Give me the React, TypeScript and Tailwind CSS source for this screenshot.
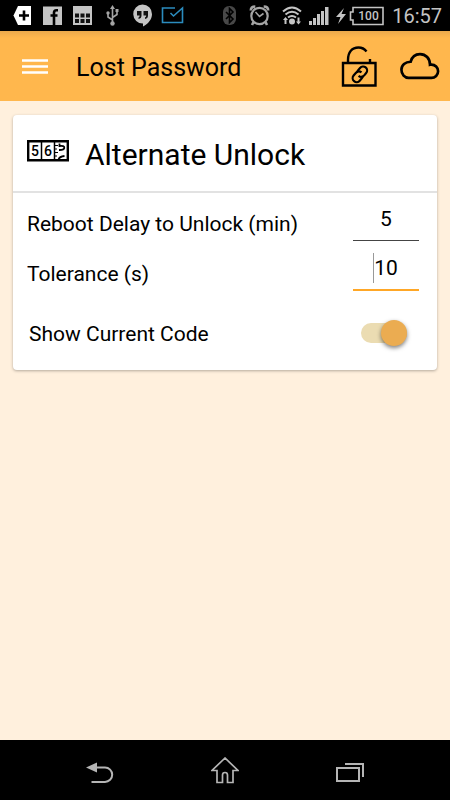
import { useState } from "react";
import type { ReactNode } from "react";

function StatusIcon({ children }: { children: ReactNode }) {
  return (
    <svg width="30" height="31" viewBox="0 0 30 31" fill="none" aria-hidden="true">
      {children}
    </svg>
  );
}

function StatusBar() {
  return (
    <div className="flex h-[31px] items-center justify-between bg-black px-2 text-[#c4c4c4]">
      <div className="flex">
        <StatusIcon>
          <path d="M10 6h13v19H10L5.500 15.500z" fill="#fff" />
          <path d="M16 10.500v10M11 15.500h10" stroke="#000" strokeWidth="2.600" />
        </StatusIcon>
        <StatusIcon>
          <path d="M5 6.500h19v18.500H5z" fill="#c4c4c4" />
          <path d="M20 10.200h-1.500q-2.500 0-2.500 2.500V25M12.500 15.500h7" stroke="#000" strokeWidth="2.600" />
        </StatusIcon>
        <StatusIcon>
          <path d="M5 6h19v19H5z" fill="#c4c4c4" />
          <path d="M7 13.500h4v4H7zM12.500 13.500h4v4h-4zM18 13.500h4v4h-4zM7 19h4v4H7zM12.500 19h4v4h-4zM18 19h4v4h-4z" fill="#111" />
        </StatusIcon>
        <StatusIcon>
          <path d="M14.500 8v15M14.500 20l-4.500-3v-4M14.500 17.500l4.500-3v-4" stroke="#a5a5a5" strokeWidth="1.600" />
          <path d="M14.500 5l2.500 4h-5zM17.500 9h3v3h-3z" fill="#a5a5a5" />
          <circle cx="10" cy="13" r="1.700" fill="#a5a5a5" />
          <circle cx="14.500" cy="23.500" r="2.200" fill="#a5a5a5" />
        </StatusIcon>
        <StatusIcon>
          <path d="M14.500 4.500a9.500 9.500 0 0 1 9.500 9.700c0 5-4 9.800-9 12.300v-3a9.300 9.300 0 1 1-.5-19z" fill="#c4c4c4" />
          <path d="M9 11h4.500v4.500q0 3-3 3.500v-1.500q1.200-.5 1.200-2H9zM15.500 11H20v4.500q0 3-3 3.500v-1.500q1.200-.5 1.200-2h-2.700z" fill="#111" />
        </StatusIcon>
        <StatusIcon>
          <path d="M17 8H4.500v14.500h20V8l-9 8-3-3" stroke="#2b8cbe" strokeWidth="1.600" />
        </StatusIcon>
      </div>

      <div className="flex items-center">
        <StatusIcon>
          <rect x="9" y="6" width="13" height="19" rx="6" fill="#484848" />
          <path d="M12 12l7 7-3.500 3.500v-14L19 12l-7 7" stroke="#000" strokeWidth="1.600" />
        </StatusIcon>
        <StatusIcon>
          <circle cx="15.500" cy="16" r="8.200" stroke="#a5a5a5" strokeWidth="2.200" />
          <path d="M11.500 12l4 4.500 4-3" stroke="#a5a5a5" strokeWidth="1.600" />
          <path d="M6.800 10.500q0-4 4.500-4M24.200 10.500q0-4-4.500-4M9.500 22L8 25M21.500 22l1.500 3" stroke="#a5a5a5" strokeWidth="2.600" />
        </StatusIcon>
        <svg width="34" height="31" viewBox="0 0 34 31" fill="none" aria-hidden="true">
          <path d="M9 11.500q9-8 18 0M11.500 14.500q6.500-5.500 13 0M14 17.500q4-3 8 0" stroke="#c4c4c4" strokeWidth="2" />
          <circle cx="18" cy="21.500" r="3" fill="#c4c4c4" />
          <path d="M10.500 24v-4H9l2.500-3 2.500 3h-1.500v4zM23.500 17.500v4H22l2.500 3 2.500-3h-1.500v-4z" fill="#c4c4c4" />
        </svg>
        <svg width="24" height="31" viewBox="0 0 24 31" fill="#c4c4c4" aria-hidden="true">
          <path d="M1 21h3v4H1zM5 18h3v7H5zM9 14h3v11H9zM13 11h3v14h-3zM17 7h3.500v18H17z" />
        </svg>
        <svg width="17" height="31" viewBox="0 0 17 31" fill="#c4c4c4" aria-hidden="true">
          <path d="M12 8L4 17h4.500L6 24l8-10H9.500z" />
        </svg>
        <div className="relative h-[31px] w-[35px]">
          <svg width="35" height="31" viewBox="0 0 35 31" fill="none" aria-hidden="true">
            <path d="M4 7.500h30v17H4v-4.500H1.500v-8H4z" stroke="#c4c4c4" strokeWidth="1.600" />
          </svg>
          <span className="absolute inset-0 pl-1 text-center text-xs leading-8 font-medium">100</span>
        </div>
        <span className="w-[58px] text-right text-xl">16:57</span>
      </div>
    </div>
  );
}

function AppBar() {
  return (
    <header className="flex h-[70px] items-center bg-[#ffb74d] bg-linear-to-b from-[#eba94c] to-[#ffb74d] to-10% pr-2.5 pl-5">
      <button type="button" aria-label="Menu" className="p-0.5">
        <svg width="26" height="20" viewBox="0 0 26 20" stroke="#fff" strokeWidth="2.500">
          <path d="M0 4.500h26M0 10.500h26M0 16.500h26" />
        </svg>
      </button>
      <h1 className="flex-1 pt-1 pl-[26px] text-[25px] leading-8">Lost Password</h1>
      <button type="button" aria-label="Unlock" className="mr-[22px]">
        <svg width="38" height="44" viewBox="0 0 38 44" fill="none" stroke="#000">
          <path d="M3 19h32.500V41.500H3z" strokeWidth="2.400" />
          <path d="M8 19v-3C8 8 12 3.500 18.500 3.500q5 0 8 4M30 19v-4" strokeWidth="2.400" />
          <g strokeWidth="2.200" transform="translate(19.500 30) rotate(-50)">
            <path d="M1 3.500A3.500 3.500 0 0 1 -1.500 4.500H-5a4 4 0 0 1 0-8h4a4 4 0 0 1 3.500 4" />
            <path d="M-1 -2.500A3.500 3.500 0 0 1 1.500 -3.500H5a4 4 0 0 1 0 8H2a4 4 0 0 1 -4-4" />
          </g>
        </svg>
      </button>
      <button type="button" aria-label="Cloud">
        <svg width="40" height="30" viewBox="0 0 42 30" fill="none" stroke="#000" strokeWidth="2.800">
          <path d="M9 27.500h24a7 7 0 0 0 0-14c-.7 0-1 .1-1.500.2C31.500 7 27 2.500 21 2.500c-5 0-8.500 3-9.800 8C5.500 10.500 1.500 14 1.500 19c0 5 3.500 8.500 7.500 8.500z" />
        </svg>
      </button>
    </header>
  );
}

function CounterIcon() {
  return (
    <svg width="42" height="26" viewBox="0 0 42 26" fill="none" stroke="#000" aria-hidden="true">
      <path d="M1.200 1.200h39.600v19H1.200z" strokeWidth="2.400" />
      <path d="M14.500 1v19M27.500 1v19" strokeWidth="1.500" />
      <path d="M28 5.500h3M28 9h2M28 12.500h3M28 16h2" strokeWidth="1.200" />
      <path d="M32.500 3.500v2.500q5-.5 4.800 1.800t-5.300 2.200M31.500 19.500q1-3 6-3.500" strokeWidth="1.800" />
      <g fill="#000" stroke="none" fontSize="14" fontWeight="500" textAnchor="middle">
        <text x="8" y="15.500">5</text>
        <text x="21" y="15.500">6</text>
      </g>
    </svg>
  );
}

export default function App() {
  const [delay, setDelay] = useState("5");
  const [tolerance, setTolerance] = useState("10");
  const [showCode, setShowCode] = useState(true);

  return (
    <div className="flex min-h-screen flex-col bg-[#fff0dd] font-['Roboto',sans-serif] text-black">
      <StatusBar />
      <AppBar />

      <main className="flex-1 px-[13px] pt-3.5">
        <section className="rounded-sm bg-white shadow-[0_1px_3px_rgba(0,0,0,0.3)]">
          <div className="flex h-[78px] items-center gap-4 border-b-2 border-[#e2e2e2] pl-3.5">
            <CounterIcon />
            <h2 className="pt-1 text-3xl">Alternate Unlock</h2>
          </div>

          <form className="pt-[5px] pr-[18px] pb-0.5 pl-3.5 text-[21px]">
            <div className="flex h-[50px] items-center justify-between">
              <label htmlFor="delay" className="pt-1">Reboot Delay to Unlock (min)</label>
              <input
                id="delay"
                inputMode="numeric"
                className="h-9 w-[66px] border-b border-[#444] pb-2 text-center outline-none"
                value={delay}
                onChange={(e) => setDelay(e.target.value)}
              />
            </div>
            <div className="flex h-[50px] items-center justify-between">
              <label htmlFor="tolerance" className="pt-1">Tolerance (s)</label>
              <div className="relative">
                <input
                  id="tolerance"
                  inputMode="numeric"
                  className="block h-9 w-[66px] border-b-2 border-[#ffa726] pb-2 text-center outline-none"
                  value={tolerance}
                  onChange={(e) => setTolerance(e.target.value)}
                />
                <span className="absolute -top-0.5 left-5 h-[30px] w-px bg-[#999]" />
              </div>
            </div>
            <div className="flex h-[70px] items-center justify-between pr-3 pl-0.5">
              <label htmlFor="showCode" className="pt-1">Show Current Code</label>
              <input
                id="showCode"
                type="checkbox"
                role="switch"
                className="relative h-5 w-[46px] appearance-none rounded-full bg-[#ccc] before:absolute before:-top-[3px] before:left-0 before:size-[26px] before:rounded-full before:bg-white before:shadow-[0_2px_4px_rgba(0,0,0,0.5)] checked:bg-[#ebdcb2] checked:before:left-5 checked:before:bg-[#ebac51]"
                checked={showCode}
                onChange={(e) => setShowCode(e.target.checked)}
              />
            </div>
          </form>
        </section>
      </main>

      <nav className="flex h-[60px] items-center justify-center gap-[97px] bg-black pt-0.5">
        <button type="button" aria-label="Back">
          <svg width="28" height="28" viewBox="0 0 28 28" fill="none">
            <path d="M9 10.500h10a7.200 7.200 0 0 1 0 14.400H5.500" stroke="#b5b5b5" strokeWidth="2" />
            <path d="M0 10.500L11 5.500v10z" fill="#b5b5b5" />
          </svg>
        </button>
        <button type="button" aria-label="Home">
          <svg width="28" height="28" viewBox="0 0 28 28" fill="none" stroke="#b5b5b5" strokeWidth="1.700">
            <path d="M14 1L1 13.500h5v12h5.500V18a2.500 2.500 0 0 1 5 0v7.500H22v-12h5z" />
          </svg>
        </button>
        <button type="button" aria-label="Recent apps">
          <svg width="28" height="28" viewBox="0 0 28 28" fill="none" stroke="#b5b5b5" strokeWidth="2">
            <path d="M1 11h22v13H1zM9 7h18v13" />
          </svg>
        </button>
      </nav>
    </div>
  );
}
